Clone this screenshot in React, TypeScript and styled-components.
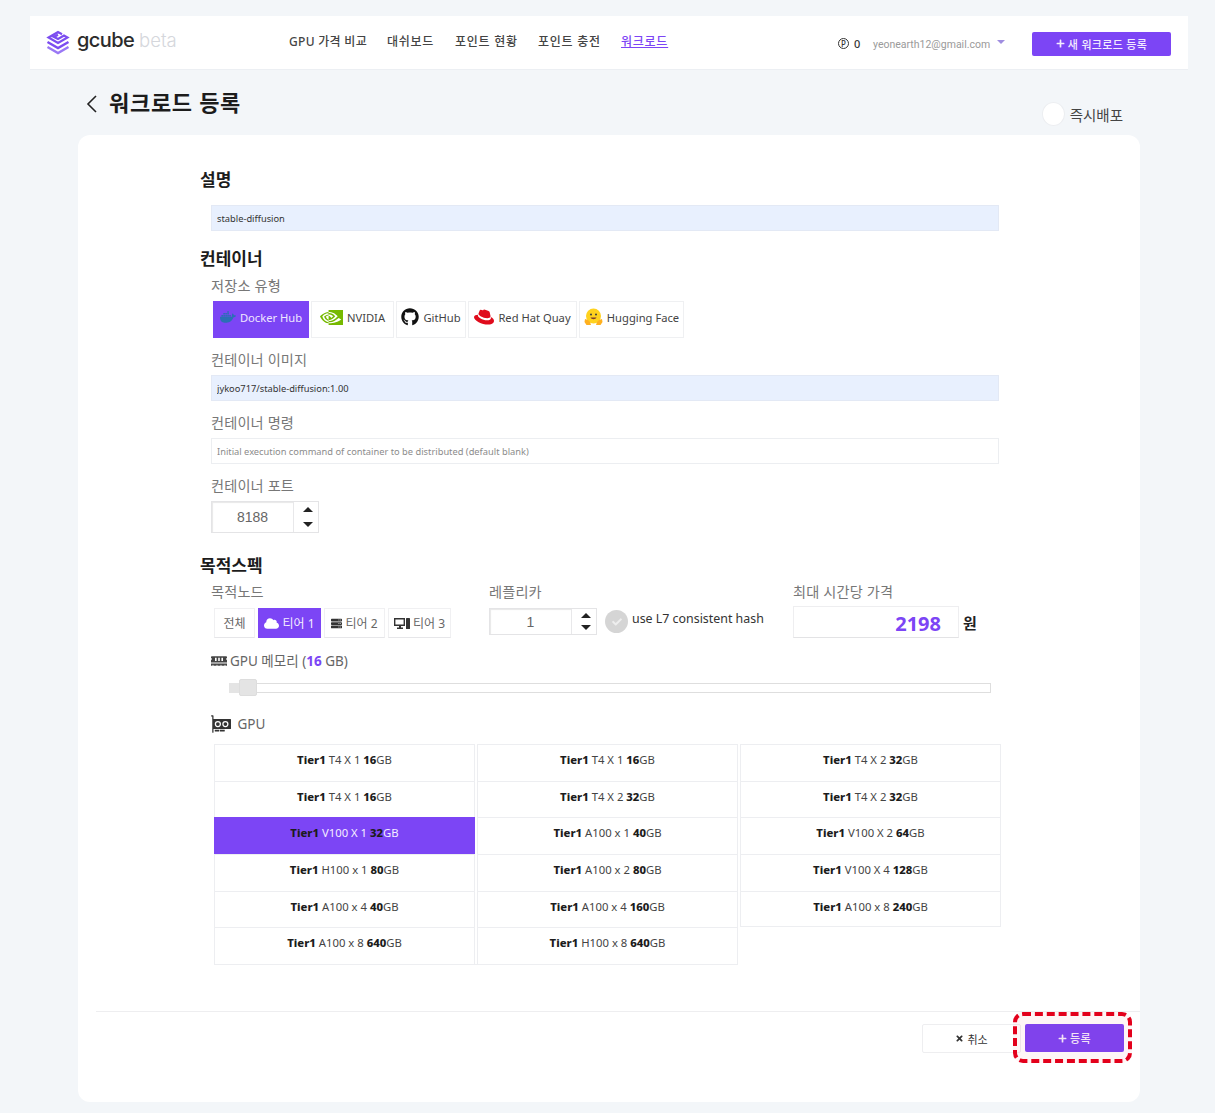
import React from 'react';
import styled, { createGlobalStyle } from 'styled-components';
import { FaCloud, FaGithub, FaMemory, FaPlus, FaServer, FaTimes, FaCheck } from 'react-icons/fa';
import { BsGpuCard } from 'react-icons/bs';
import { SiDocker, SiNvidia, SiRedhat } from 'react-icons/si';

const purple = '#7c45f5';
const font = `"Noto Sans", "Noto Sans CJK KR", sans-serif`;

const Global = createGlobalStyle`
  html, body { margin: 0; padding: 0; background: #f3f6f9; }
  body { font-family: ${font}; color: #333; overflow: hidden; }
  * { box-sizing: border-box; }
`;

const Page = styled.div`
  width: 1215px;
  height: 1113px;
  padding-top: 16px;
`;

const TopBar = styled.header`
  margin-left: 30px;
  width: 1158px;
  height: 54px;
  background: #fff;
  border-bottom: 1px solid #eceff3;
  display: flex;
  align-items: center;
  position: relative;
`;

const LogoWrap = styled.div`
  display: flex;
  align-items: center;
  margin-left: 16px;
  width: 243px;
  gap: 7px;
`;

const LogoName = styled.span`
  font-family: "Inter", sans-serif;
  font-size: 20px;
  font-weight: 500;
  letter-spacing: -0.6px;
  color: #2b2b2b;
  margin-top: -6px;
`;

const LogoBeta = styled.span`
  font-family: "Inter", sans-serif;
  font-size: 18.5px;
  font-weight: 300;
  color: #d5d7dc;
  margin: -6px 0 0 -2px;
`;

const Nav = styled.nav`
  display: flex;
  width: 549px;
  margin-top: -4px;
`;

const NavLink = styled.a<{ $w: number; $active?: boolean }>`
  width: ${p => p.$w}px;
  font-size: 12px;
  font-weight: 500;
  letter-spacing: ${p => (p.$w === 98 ? 0.3 : 0.75)}px;
  color: ${p => (p.$active ? purple : '#444')};
  text-decoration: ${p => (p.$active ? 'underline' : 'none')};
  white-space: nowrap;
`;

const Points = styled.div`
  display: flex;
  align-items: center;
  gap: 5px;
  width: 35px;
  font-size: 11px;
  font-weight: 500;
  margin-top: 2px;
`;

const PointMark = styled.span`
  width: 11px;
  height: 11px;
  border: 1px solid #333;
  border-radius: 50%;
  font-size: 8px;
  line-height: 9px;
  text-align: center;
`;

const Email = styled.span`
  font-family: "Roboto", sans-serif;
  font-size: 10.5px;
  color: #9a9a9a;
  width: 124px;
  margin-top: 3px;
  white-space: nowrap;
`;

const Caret = styled.span`
  width: 0;
  height: 0;
  border-left: 4px solid transparent;
  border-right: 4px solid transparent;
  border-top: 4px solid #9f8de0;
  margin: 0 27px 2px 0;
`;

const PurpleButton = styled.button<{ $w: number; $h: number; $drop?: number }>`
  width: ${p => p.$w}px;
  height: ${p => p.$h}px;
  margin-top: ${p => p.$drop ?? 0}px;
  background: ${purple};
  border: 0;
  border-radius: 2px;
  color: #f3ecff;
  font-family: ${font};
  font-size: 11px;
  font-weight: 500;
  display: flex;
  align-items: center;
  justify-content: center;
  gap: 3px;
  padding: 0;
  letter-spacing: 0.3px;
`;

const TitleRow = styled.div`
  display: flex;
  align-items: center;
  height: 65px;
  padding: 0 0 0 86px;
  position: relative;
`;

const BackIcon = styled.svg`
  width: 12px;
  height: 20px;
  margin: 2px 11px 0 0;
`;

const PageTitle = styled.h1`
  margin: -4px 0 0 0;
  font-size: 22px;
  font-weight: 700;
  color: #1c1c1c;
  letter-spacing: 0.7px;
`;

const DeployToggle = styled.div`
  position: absolute;
  right: 92px;
  top: 32px;
  display: flex;
  align-items: center;
  gap: 5px;
  font-size: 14.5px;
  color: #444;
`;

const ToggleKnob = styled.span`
  width: 23px;
  height: 24px;
  border-radius: 50%;
  background: #fff;
  border: 1px solid #eceef1;
`;

const Card = styled.main`
  margin-left: 78px;
  width: 1062px;
  height: 967px;
  background: #fff;
  border-radius: 12px;
  padding-top: 33px;
  display: flex;
  flex-direction: column;
`;

const Form = styled.div`
  padding-left: 121px;
  flex: 1;
`;

const SectionTitle = styled.h2<{ $top?: number }>`
  margin: ${p => p.$top ?? 0}px 0 0 1px;
  height: 24px;
  line-height: 24px;
  font-size: 17px;
  font-weight: 700;
  color: #1c1c1c;
`;

const Indent = styled.div`
  padding-left: 12px;
`;

const Label = styled.div<{ $top?: number; $small?: boolean }>`
  margin-top: ${p => p.$top ?? 12}px;
  height: 20px;
  line-height: 20px;
  font-size: ${p => (p.$small ? 13.5 : 14.2)}px;
  color: ${p => (p.$small ? '#666' : '#777')};
  letter-spacing: ${p => (p.$small ? 0 : 0.15)}px;
  display: flex;
  align-items: center;
  gap: 3px;
  white-space: nowrap;
`;

const TextInput = styled.input<{ $filled?: boolean; $top?: number }>`
  display: block;
  width: 788px;
  height: 26px;
  margin-top: ${p => p.$top ?? 5}px;
  padding: 0 5px;
  font-family: ${font};
  font-size: 9.3px;
  color: #333;
  background: ${p => (p.$filled ? '#e8f0fe' : '#fff')};
  border: 1px solid ${p => (p.$filled ? '#e3e9f5' : '#eceef1')};
  outline: none;
  &::placeholder { color: #8b8b8b; }
`;

const RepoTabs = styled.div`
  display: flex;
  gap: 2px;
  margin: 5px 0 0 2px;
`;

const RepoTab = styled.div<{ $w: number; $active?: boolean }>`
  width: ${p => p.$w}px;
  height: 37px;
  padding-bottom: 5px;
  display: flex;
  align-items: center;
  justify-content: center;
  gap: 4px;
  font-size: 11.2px;
  color: ${p => (p.$active ? '#efe6ff' : '#444')};
  background: ${p => (p.$active ? purple : '#fff')};
  border: 1px solid ${p => (p.$active ? purple : '#eff0f2')};
  white-space: nowrap;
`;

const Stepper = styled.div<{ $h: number }>`
  width: 108px;
  height: ${p => p.$h}px;
  display: flex;
  border: 1px solid #e4e4e6;
  margin-top: 5px;
`;

const StepperValue = styled.div`
  flex: 1;
  display: flex;
  align-items: center;
  justify-content: center;
  font-family: "Liberation Sans", sans-serif;
  font-size: 14px;
  color: #666;
  border-right: 1px solid #e8e8ea;
  box-shadow: inset 1px 1px 1px #e8e8e8;
`;

const StepperArrows = styled.div`
  width: 24px;
  padding-left: 3px;
  display: flex;
  flex-direction: column;
  align-items: center;
  justify-content: space-around;
`;

const Arrow = styled.span<{ $up?: boolean }>`
  width: 0;
  height: 0;
  border-left: 5px solid transparent;
  border-right: 5px solid transparent;
  ${p => (p.$up ? 'border-bottom: 5px solid #222;' : 'border-top: 5px solid #222;')}
`;

const SpecRow = styled.div`
  display: grid;
  grid-template-columns: 278px 304px 1fr;
  margin-top: 4px;
`;

const TierTabs = styled.div`
  display: flex;
  gap: 3px;
  margin: 6px 0 0 3px;
`;

const TierTab = styled.div<{ $w: number; $active?: boolean }>`
  width: ${p => p.$w}px;
  height: 30px;
  display: flex;
  align-items: center;
  justify-content: center;
  gap: 3px;
  font-size: 12px;
  color: ${p => (p.$active ? '#f4eeff' : '#666')};
  background: ${p => (p.$active ? purple : '#fff')};
  border: 1px solid ${p => (p.$active ? purple : '#f0f0f2')};
  border-bottom-color: ${p => (p.$active ? purple : '#e6e6e9')};
`;

const TierIcon = styled.span<{ $active?: boolean }>`
  display: flex;
  color: ${p => (p.$active ? '#fff' : '#333')};
`;

const ReplicaLine = styled.div`
  display: flex;
  align-items: center;
  gap: 8px;
  margin-top: 1px;
`;

const CheckCircle = styled.span`
  width: 23px;
  height: 23px;
  border-radius: 50%;
  background: #d5d5d5;
  color: #eee;
  display: flex;
  align-items: center;
  justify-content: center;
  margin: 5px -4px 0 0;
`;

const HashText = styled.span`
  font-size: 12.4px;
  color: #333;
  margin-bottom: 2px;
`;

const PriceLine = styled.div`
  display: flex;
  align-items: center;
  gap: 4px;
  margin-top: 4px;
`;

const PriceBox = styled.div`
  width: 166px;
  height: 32px;
  border: 1px solid #eeeef0;
  border-bottom-color: #e3e3e5;
  text-align: right;
  padding-right: 17px;
  font-size: 20px;
  line-height: 33px;
  font-weight: 700;
  color: ${purple};
`;

const Won = styled.span`
  font-size: 15px;
  font-weight: 700;
  color: #222;
`;

const Accent = styled.b`
  color: ${purple};
`;

const SliderTrack = styled.div`
  position: relative;
  margin: 12px 0 0 18px;
  width: 762px;
  height: 10px;
  border: 1px solid #dedede;
  background: #fff;
`;

const SliderFill = styled.div`
  position: absolute;
  left: -1px;
  top: -1px;
  width: 12px;
  height: 10px;
  background: #e4e4e4;
`;

const SliderThumb = styled.div`
  position: absolute;
  left: 9px;
  top: -5px;
  width: 18px;
  height: 17px;
  background: #e4e4e4;
  border-radius: 2px;
  border: 1px solid #ddd;
`;

const GpuGrid = styled.div`
  display: grid;
  grid-template-columns: repeat(3, 261px);
  column-gap: 2px;
  margin: 10px 0 0 3px;
`;

const GpuCell = styled.div<{ $active?: boolean }>`
  height: 36.7px;
  line-height: 27px;
  text-align: center;
  font-size: 11.3px;
  padding-top: 1px;
  white-space: pre;
  color: ${p => (p.$active ? '#f4eeff' : '#444')};
  background: ${p => (p.$active ? purple : '#fff')};
  border: 1px solid ${p => (p.$active ? purple : '#edeef1')};
  border-bottom: 0;
  &:nth-child(15) { border-bottom: 1px solid #edeef1; }
  b { color: #1c1c1c; font-weight: 800; }
`;

const GridEnd = styled.div`
  width: 524px;
  margin-left: 3px;
  border-top: 1px solid #edeef1;
`;

const Footer = styled.footer`
  margin: 0 0 49px 18px;
  border-top: 1px solid #eeeef0;
  padding: 12px 16px 0 0;
  display: flex;
  justify-content: flex-end;
  gap: 4px;
`;

const CancelButton = styled.button`
  width: 99px;
  height: 29px;
  background: #fff;
  border: 1px solid #eeeef0;
  border-radius: 2px;
  color: #333;
  font-family: ${font};
  font-size: 11px;
  display: flex;
  align-items: center;
  justify-content: center;
  gap: 3px;
  padding: 0;
`;

const Highlighted = styled.div`
  position: relative;
`;

const DashedMark = styled.div`
  position: absolute;
  left: -12px;
  right: -8px;
  top: -12px;
  bottom: -10px;
  border: 4px dashed #e3001b;
  border-radius: 10px;
  background: rgba(227, 0, 27, 0.04);
  pointer-events: none;
`;

const Logo = () => (
  <svg width="24" height="25" viewBox="0 0 24 25" fill="none" stroke="#7c4df0">
    <path d="M16 4.2 12 2 2.5 7.5 12 13l9.5-5.5L18 5.5 12 9 8 7l4-2.2" strokeWidth="2.2" />
    <path d="M1.5 12 12 18l10.5-6" strokeWidth="2.4" />
    <path d="M1.5 17 12 23l10.5-6" stroke="#9a78f5" strokeWidth="2.4" />
  </svg>
);

const HuggingFace = () => (
  <svg width="19" height="18" viewBox="0 0 19 18">
    <circle cx="9.5" cy="8" r="7.5" fill="#ffd21e" />
    <circle cx="7" cy="6.5" r="1" fill="#3a3b45" />
    <circle cx="12" cy="6.5" r="1" fill="#3a3b45" />
    <path d="M6.5 9.5c1 2.2 5 2.2 6 0" fill="#7a3b2e" />
    <path d="M1 11l3 1 2 2 1 3H2.5L0.5 14ZM18 11l-3 1-2 2-1 3h4.500L18.500 14Z" fill="#ffb01f" />
  </svg>
);

const DesktopTower = () => (
  <svg width="16" height="12" viewBox="0 0 16 12" fill="#333">
    <path d="M0 1h11v8H7v1.500h2V12H3v-1.500h2V9H0Zm1.400 1.400v5.200h8.200V2.400Z" fillRule="evenodd" />
    <rect x="12" y="1" width="4" height="11" rx="0.6" />
  </svg>
);

type Gpu = { model: string; size: string; active?: boolean };

const gpus: Gpu[] = [
  { model: 'T4 X 1', size: '16' },
  { model: 'T4 X 1', size: '16' },
  { model: 'T4 X 2', size: '32' },
  { model: 'T4 X 1', size: '16' },
  { model: 'T4 X 2', size: '32' },
  { model: 'T4 X 2', size: '32' },
  { model: 'V100 X 1', size: '32', active: true },
  { model: 'A100 x 1', size: '40' },
  { model: 'V100 X 2', size: '64' },
  { model: 'H100 x 1', size: '80' },
  { model: 'A100 x 2', size: '80' },
  { model: 'V100 X 4', size: '128' },
  { model: 'A100 x 4', size: '40' },
  { model: 'A100 x 4', size: '160' },
  { model: 'A100 x 8', size: '240' },
  { model: 'A100 x 8', size: '640' },
  { model: 'H100 x 8', size: '640' },
];

const App = () => (
  <Page>
    <Global />
    <TopBar>
      <LogoWrap>
        <Logo />
        <LogoName>gcube</LogoName>
        <LogoBeta>beta</LogoBeta>
      </LogoWrap>
      <Nav>
        <NavLink $w={98}>GPU 가격 비교</NavLink>
        <NavLink $w={68}>대쉬보드</NavLink>
        <NavLink $w={83}>포인트 현황</NavLink>
        <NavLink $w={83}>포인트 충전</NavLink>
        <NavLink $w={60} $active>워크로드</NavLink>
      </Nav>
      <Points>
        <PointMark>P</PointMark>0
      </Points>
      <Email>yeonearth12@gmail.com</Email>
      <Caret />
      <PurpleButton $w={139} $h={24} $drop={2}>
        <FaPlus size={9} /> 새 워크로드 등록
      </PurpleButton>
    </TopBar>

    <TitleRow>
      <BackIcon viewBox="0 0 12 20">
        <path d="M10 2 2 10l8 8" fill="none" stroke="#222" strokeWidth="1.6" />
      </BackIcon>
      <PageTitle>워크로드 등록</PageTitle>
      <DeployToggle>
        <ToggleKnob />
        즉시배포
      </DeployToggle>
    </TitleRow>

    <Card>
      <Form>
        <SectionTitle>설명</SectionTitle>
        <Indent>
          <TextInput $filled $top={13} readOnly value="stable-diffusion" />
        </Indent>

        <SectionTitle $top={16}>컨테이너</SectionTitle>
        <Indent>
          <Label $top={5}>저장소 유형</Label>
          <RepoTabs>
            <RepoTab $w={96} $active>
              <SiDocker size={16} color="#2a6fb5" /> Docker Hub
            </RepoTab>
            <RepoTab $w={83}>
              <SiNvidia size={23} color="#76b900" /> NVIDIA
            </RepoTab>
            <RepoTab $w={70}>
              <FaGithub size={18} color="#111" /> GitHub
            </RepoTab>
            <RepoTab $w={109}>
              <SiRedhat size={20} color="#e00b1c" /> Red Hat Quay
            </RepoTab>
            <RepoTab $w={105}>
              <HuggingFace /> Hugging Face
            </RepoTab>
          </RepoTabs>

          <Label>컨테이너 이미지</Label>
          <TextInput $filled readOnly value="jykoo717/stable-diffusion:1.00" />

          <Label>컨테이너 명령</Label>
          <TextInput placeholder="Initial execution command of container to be distributed (default blank)" />

          <Label>컨테이너 포트</Label>
          <Stepper $h={32}>
            <StepperValue>8188</StepperValue>
            <StepperArrows>
              <Arrow $up />
              <Arrow />
            </StepperArrows>
          </Stepper>
        </Indent>

        <SectionTitle $top={21}>목적스펙</SectionTitle>
        <Indent>
          <SpecRow>
            <div>
              <Label $top={0}>목적노드</Label>
              <TierTabs>
                <TierTab $w={41}>전체</TierTab>
                <TierTab $w={63} $active>
                  <TierIcon $active>
                    <FaCloud size={15} />
                  </TierIcon>
                  티어 1
                </TierTab>
                <TierTab $w={61}>
                  <TierIcon>
                    <FaServer size={11} />
                  </TierIcon>
                  티어 2
                </TierTab>
                <TierTab $w={63}>
                  <TierIcon>
                    <DesktopTower />
                  </TierIcon>
                  티어 3
                </TierTab>
              </TierTabs>
            </div>
            <div>
              <Label $top={0}>레플리카</Label>
              <ReplicaLine>
                <Stepper $h={27}>
                  <StepperValue>1</StepperValue>
                  <StepperArrows>
                    <Arrow $up />
                    <Arrow />
                  </StepperArrows>
                </Stepper>
                <CheckCircle>
                  <FaCheck size={10} />
                </CheckCircle>
                <HashText>use L7 consistent hash</HashText>
              </ReplicaLine>
            </div>
            <div>
              <Label $top={0}>최대 시간당 가격</Label>
              <PriceLine>
                <PriceBox>2198</PriceBox>
                <Won>원</Won>
              </PriceLine>
            </div>
          </SpecRow>

          <Label $top={13} $small>
            <FaMemory size={16} color="#444" />
            <span>
              GPU 메모리 (<Accent>16</Accent> GB)
            </span>
          </Label>
          <SliderTrack>
            <SliderFill />
            <SliderThumb />
          </SliderTrack>

          <Label $top={21} $small>
            <BsGpuCard size={20} color="#333" />
            <span>&nbsp;GPU</span>
          </Label>
        </Indent>
        <Indent>
          <GpuGrid>
            {gpus.map((g, i) => (
              <GpuCell key={i} $active={g.active}>
                <b>Tier1</b> {g.model} <b>{g.size}</b>GB
              </GpuCell>
            ))}
          </GpuGrid>
          <GridEnd />
        </Indent>
      </Form>
      <Footer>
        <CancelButton>
          <FaTimes size={9} /> 취소
        </CancelButton>
        <Highlighted>
          <PurpleButton $w={99} $h={28}>
            <FaPlus size={9} /> 등록
          </PurpleButton>
          <DashedMark />
        </Highlighted>
      </Footer>
    </Card>
  </Page>
);

export default App;
